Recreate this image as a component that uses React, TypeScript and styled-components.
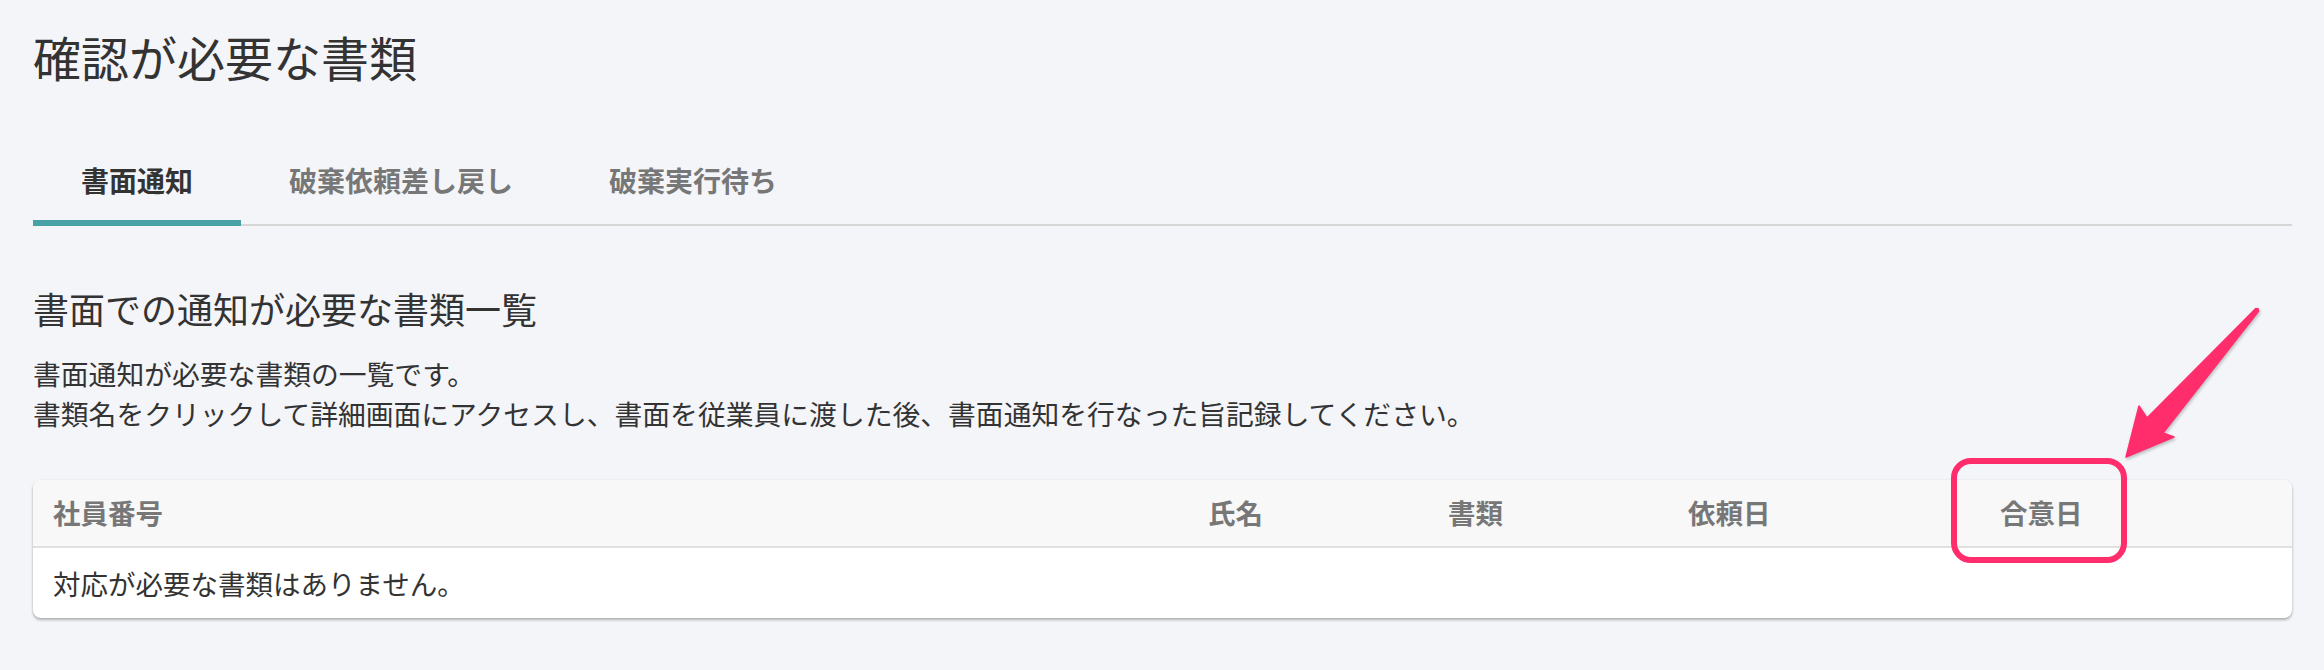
import React from "react";
import styled, { createGlobalStyle } from "styled-components";

const GlobalStyle = createGlobalStyle`
  html, body {
    margin: 0;
    padding: 0;
    background: #f4f5f9;
  }
  body {
    font-family: "Noto Sans CJK JP", "Noto Sans", sans-serif;
    color: #333333;
  }
  * { box-sizing: border-box; }
`;

const Page = styled.div`
  position: relative;
  width: 2324px;
  min-height: 670px;
  padding: 28px 32px 0 33px;
  background: #f4f5f9;
`;

const Title = styled.h1`
  margin: 0;
  font-size: 48px;
  line-height: 56px;
  font-weight: 400;
  color: #333333;
`;

const TabBar = styled.div`
  display: flex;
  margin-top: 56px;
  box-shadow: inset 0 -2px 0 #d6d6d6;
`;

const Tab = styled.div<{ $active?: boolean }>`
  padding: 20px 48px;
  font-size: 28px;
  line-height: 40px;
  font-weight: 700;
  color: ${(p) => (p.$active ? "#333333" : "#777777")};
  border-bottom: 6px solid ${(p) => (p.$active ? "#47a1a5" : "transparent")};
`;

const Heading = styled.h2`
  margin: 60px 0 0;
  font-size: 36px;
  line-height: 44px;
  font-weight: 400;
  color: #333333;
`;

const Description = styled.p`
  margin: 23px 0 0;
  font-size: 27.8px;
  line-height: 40px;
  color: #333333;
`;

const Card = styled.div`
  margin-top: 47px;
  background: #ffffff;
  border-radius: 8px;
  overflow: hidden;
  box-shadow: 0 2px 3px rgba(0, 0, 0, 0.28), 0 0 2px rgba(0, 0, 0, 0.08);
`;

const HeaderRow = styled.div`
  display: grid;
  grid-template-columns: 1fr 240px 240px 312px 312px;
  background: #f8f8f8;
  border-bottom: 2px solid #e0e0e0;
`;

const HeaderCell = styled.div`
  padding: 12px 20px 14px;
  font-size: 27.5px;
  line-height: 40px;
  font-weight: 700;
  color: #777777;
`;

const BodyRow = styled.div`
  padding: 15px 20px;
  font-size: 27.5px;
  line-height: 40px;
  color: #333333;
`;

const Highlight = styled.div`
  position: absolute;
  left: 1951px;
  top: 458px;
  width: 176px;
  height: 105px;
  border: 6.5px solid #ff2d6b;
  border-radius: 20px;
  pointer-events: none;
`;

const ArrowSvg = styled.svg`
  position: absolute;
  left: 2100px;
  top: 290px;
  overflow: visible;
  pointer-events: none;
  filter: drop-shadow(1px 2px 1.5px rgba(0, 0, 0, 0.22));
`;

const columns = ["社員番号", "氏名", "書類", "依頼日", "合意日"];

export default function App() {
  return (
    <>
      <GlobalStyle />
      <Page>
        <Title>確認が必要な書類</Title>
        <TabBar>
          <Tab $active>書面通知</Tab>
          <Tab>破棄依頼差し戻し</Tab>
          <Tab>破棄実行待ち</Tab>
        </TabBar>
        <Heading>書面での通知が必要な書類一覧</Heading>
        <Description>
          書面通知が必要な書類の一覧です。
          <br />
          書類名をクリックして詳細画面にアクセスし、書面を従業員に渡した後、書面通知を行なった旨記録してください。
        </Description>
        <Card>
          <HeaderRow>
            {columns.map((c) => (
              <HeaderCell key={c}>{c}</HeaderCell>
            ))}
          </HeaderRow>
          <BodyRow>対応が必要な書類はありません。</BodyRow>
        </Card>
        <Highlight />
        <ArrowSvg width="180" height="180" viewBox="2100 290 180 180">
          <polygon
            points="2255.5,308.7 2147,418 2139,406 2126,457 2174,437 2163,433 2258.5,311.3"
            fill="#ff2d6b"
            stroke="#ff2d6b"
            strokeWidth="1.5"
            strokeLinejoin="round"
          />
          <circle cx="2257" cy="310" r="2.2" fill="#ff2d6b" />
        </ArrowSvg>
      </Page>
    </>
  );
}
